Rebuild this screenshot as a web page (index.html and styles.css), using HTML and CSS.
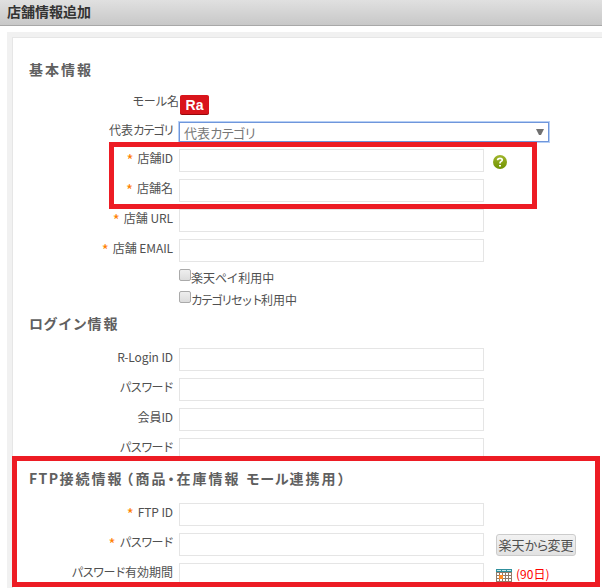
FILE: index.html
```html
<!DOCTYPE html>
<html lang="ja">
<head>
<meta charset="utf-8">
<title>店舗情報追加</title>
<link rel="stylesheet" href="styles.css">
</head>
<body>
<header class="titlebar">店舗情報追加</header>
<main class="panel">
  <section>
    <h2 class="first">基本情報</h2>
    <div class="rows">
      <div class="row mall"><label><span class="wide">モール</span>名</label><span class="badge">Ra</span></div>
      <div class="row category"><label>代表<span class="kana">カテゴリ</span></label><div class="select"><span>代表<span class="kana">カテゴリ</span></span><svg width="8" height="7" viewBox="0 0 8 7"><path d="M0 0h8L5 6H3z" fill="#707070"/></svg></div></div>
      <div class="row"><label><i>*</i>店舗<span class="latin">ID</span></label><input type="text">
        <svg class="help" width="14" height="14" viewBox="0 0 14 14"><defs><linearGradient id="green" x2="0" y2="1"><stop stop-color="#a0b52c"/><stop offset="1" stop-color="#709200"/></linearGradient></defs><circle cx="7" cy="7" r="7" fill="url(#green)"/><path d="M4.700 5.300V4.500Q4.900 3.300 7 3.300T9.300 5Q9.300 6 8 6.500Q7 6.900 7 8.600" fill="none" stroke="#fff" stroke-width="1.700"/><path d="M6 10h2v1.600H6z" fill="#fff"/></svg>
      </div>
      <div class="row"><label><i>*</i>店舗名</label><input type="text"></div>
      <div class="row"><label><i>*</i>店舗 <span class="latin">URL</span></label><input type="text"></div>
      <div class="row"><label><i>*</i>店舗 <span class="latin">EMAIL</span></label><input type="text"></div>
      <div class="check"><span class="box"></span><span>楽天<span class="wide">ペイ</span>利用中</span></div>
      <div class="check"><span class="box"></span><span><span class="kana">カテゴリセット</span>利用中</span></div>
    </div>
  </section>
  <section>
    <h2><span class="kana">ログイン</span>情報</h2>
    <div class="rows">
      <div class="row"><label><span class="latin">R-Login ID</span></label><input type="text"></div>
      <div class="row"><label><span class="password">パスワード</span></label><input type="text"></div>
      <div class="row"><label>会員<span class="latin">ID</span></label><input type="text"></div>
      <div class="row"><label><span class="password">パスワード</span></label><input type="text"></div>
    </div>
  </section>
  <section>
    <h2><span class="ftp">FTP</span>接続情報<span class="open">（</span>商品<span class="dot">・</span>在庫情報 <span class="kana">モール</span>連携用<span class="dot">）</span></h2>
    <div class="rows">
      <div class="row"><label><i>*</i><span class="latin">FTP ID</span></label><input type="text"></div>
      <div class="row"><label><i>*</i><span class="password">パスワード</span></label><input type="text"><button>楽天<span class="kana">から</span>変更</button></div>
      <div class="row"><label><span class="password">パスワード</span>有効期間</label><input type="text">
        <svg class="calendar" width="16" height="16" viewBox="0 0 16 16"><path d="M0 0h16v16H0z" fill="#927b68"/><path d="M0 0h16v3H0z" fill="#30909d"/><path d="M1 1h4v1H1zM6 1h4v1H6zM11 1h4v1h-4z" fill="#c4e9eb"/><path d="M1 4h2v2H1zM4 4h2v2H4zM7 4h2v2H7zM10 4h2v2h-2zM13 4h2v2h-2zM1 7h2v2H1zM7 7h2v2H7zM10 7h2v2h-2zM13 7h2v2h-2zM1 10h2v2H1zM4 10h2v2H4zM7 10h2v2H7zM10 10h2v2h-2zM13 10h2v2h-2z" fill="#fff"/><path d="M3 6h4v4H3z" fill="#ff8a22"/></svg>
        <span class="days">(90日)</span>
      </div>
    </div>
  </section>
</main>
<div class="mark mark-shop"></div>
<div class="mark mark-ftp"></div>
</body>
</html>
```

FILE: styles.css
```css
* { box-sizing: border-box; }
body {
  display: flex;
  flex-direction: column;
  margin: 0;
  height: 588px;
  overflow: hidden;
  position: relative;
  background: #fff;
  color: #505050;
  font: 12px/24px "Noto Sans CJK JP", sans-serif;
}
.titlebar {
  flex: none;
  height: 26px;
  padding-left: 7px;
  border-bottom: 1px solid #a8a8a8;
  background: linear-gradient(#e0e0e0, #c8c8c8);
  color: #333;
  font-size: 14px;
  font-weight: 700;
  line-height: 22px;
}
.panel {
  flex: 1;
  min-height: 0;
  overflow: hidden;
  margin: 6px 0 0 7px;
  border: solid #f1f1f1;
  border-width: 5px 0 0 5px;
  box-shadow: inset 1px 1px #e6e6e6;
  padding: 1px 0 0 1px;
}
h2 {
  height: 20px;
  margin: 4px 0 11px 16px;
  color: #606060;
  font-size: 14px;
  line-height: 19px;
  letter-spacing: 2px;
  white-space: nowrap;
}
h2.first { margin: 22px 0 9px 16px; }
h2 .kana { letter-spacing: .6px; }
.ftp { letter-spacing: 1.4px; }
.open, .dot { font-feature-settings: "halt"; }
.open { margin-left: 3px; }
.kana { letter-spacing: -2px; }
.wide { letter-spacing: -.4px; }
.latin { letter-spacing: -.1px; }
.password { letter-spacing: -1.3px; }
.row { display: flex; height: 30px; }
.row > label {
  width: 160px;
  margin-right: 6px;
  text-align: right;
  white-space: nowrap;
}
.row i {
  display: inline-block;
  height: 24px;
  margin-right: 4px;
  color: #ff8000;
  font-size: 15px;
  font-style: normal;
  line-height: 28px;
  vertical-align: top;
}
.row input {
  width: 305px;
  height: 23px;
  margin: 3px 0 0;
  border: 1px solid #e5e5e5;
  background: #fff;
}
.row.mall > label { width: 166px; margin-right: 1px; }
.badge {
  width: 29px;
  height: 19px;
  margin-top: 6px;
  border-radius: 2px;
  background: #d9141b;
  box-shadow: 0 1px #96070a;
  color: #fff;
  font: 700 14px/20px "Liberation Sans", sans-serif;
  text-align: center;
}
.row.category { height: 27px; line-height: 22px; }
.select {
  display: flex;
  justify-content: space-between;
  width: 370px;
  height: 20px;
  margin-top: 3px;
  padding: 0 4px 0 4px;
  border: 1px solid #6f96db;
  box-shadow: 0 0 0 1px #b6cff5;
  color: #777;
  font-size: 13px;
  line-height: 20px;
}
.select .kana { letter-spacing: -1.7px; }
.select svg { margin-top: 6px; }
.help { margin: 9px 0 0 9px; }
.check {
  display: flex;
  height: 22px;
  padding-left: 166px;
}
.box {
  width: 12px;
  height: 12px;
  margin-top: 3px;
  border: 1px solid #aaa;
  border-radius: 2px;
  background: linear-gradient(#eee, #dcdcdc);
}
button {
  width: 80px;
  height: 22px;
  margin: 4px 0 0 12px;
  padding: 0;
  border: 1px solid #ccc;
  border-radius: 3px;
  background: linear-gradient(#f2f2f2, #e2e2e2);
  color: #505050;
  font: 13px/20px "Noto Sans CJK JP", sans-serif;
}
.calendar { margin: 9px 0 0 12px; }
.days {
  margin-left: 4px;
  padding-top: 2px;
  color: #f00;
}
button .kana { letter-spacing: -1.5px; }
.mark { position: absolute; border: 5px solid #ed1c24; }
.mark-shop { left: 109px; top: 142px; width: 428px; height: 67px; }
.mark-ftp { left: 12px; top: 456px; width: 588px; height: 131px; }
```
